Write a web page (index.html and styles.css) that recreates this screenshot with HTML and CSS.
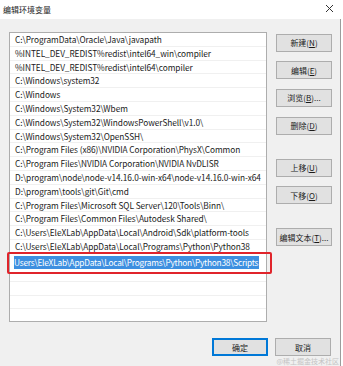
FILE: index.html
```html
<!DOCTYPE html>
<html lang="zh-CN">

<head>
    <meta charset="UTF-8">
    <meta name="viewport" content="width=device-width, initial-scale=1.0">
    <title>编辑环境变量</title>
    <link rel="stylesheet" href="styles.css">
</head>

<body>

    <div class="window">
        <div class="titlebar">
            <span class="title">编辑环境变量</span>
            <svg class="close" width="9" height="9" viewBox="0 0 9 9">
                <path d="M1 1 L8 8 M8 1 L1 8" stroke="#333" stroke-width="1" fill="none" />
            </svg>
        </div>

        <div class="dialog">
            <div class="main">
                <div class="list">
                    <div class="row">C:\ProgramData\Oracle\Java\javapath</div>
                    <div class="row">%INTEL_DEV_REDIST%redist\intel64_win\compiler</div>
                    <div class="row">%INTEL_DEV_REDIST%redist\intel64\compiler</div>
                    <div class="row">C:\Windows\system32</div>
                    <div class="row">C:\Windows</div>
                    <div class="row">C:\Windows\System32\Wbem</div>
                    <div class="row">C:\Windows\System32\WindowsPowerShell\v1.0\</div>
                    <div class="row">C:\Windows\System32\OpenSSH\</div>
                    <div class="row">C:\Program Files (x86)\NVIDIA Corporation\PhysX\Common</div>
                    <div class="row">C:\Program Files\NVIDIA Corporation\NVIDIA NvDLISR</div>
                    <div class="row">D:\program\node\node-v14.16.0-win-x64\node-v14.16.0-win-x64</div>
                    <div class="row">D:\program\tools\git\Git\cmd</div>
                    <div class="row">C:\Program Files\Microsoft SQL Server\120\Tools\Binn\</div>
                    <div class="row">C:\Program Files\Common Files\Autodesk Shared\</div>
                    <div class="row">C:\Users\EleXLab\AppData\Local\Android\Sdk\platform-tools</div>
                    <div class="row">C:\Users\EleXLab\AppData\Local\Programs\Python\Python38</div>
                    <div class="row edit">
                        <span class="selected">Users\EleXLab\AppData\Local\Programs\Python\Python38\Scripts</span>
                        <div class="mark"></div>
                    </div>
                    <div class="row empty"></div>
                    <div class="row empty"></div>
                    <div class="row empty"></div>
                </div>

                <div class="side">
                    <button class="btn">新建(<u>N</u>)</button>
                    <button class="btn">编辑(<u>E</u>)</button>
                    <button class="btn">浏览(<u>B</u>)...</button>
                    <button class="btn">删除(<u>D</u>)</button>
                    <button class="btn gap">上移(<u>U</u>)</button>
                    <button class="btn">下移(<u>O</u>)</button>
                    <button class="btn gap">编辑文本(<u>T</u>)...</button>
                </div>
            </div>

            <div class="footer">
                <button class="btn default">确定</button>
                <button class="btn">取消</button>
            </div>

            <div class="watermark">@稀土掘金技术社区</div>
        </div>
    </div>

</body>

</html>
```

FILE: styles.css
```css
body {
    margin: 0;
    font-family: "Noto Sans CJK SC", "Noto Sans", sans-serif;
    background-color: #ffffff;
}

.window {
    width: 343px;
    height: 366px;
    overflow: hidden;
}

.titlebar {
    height: 19px;
    background: #ffffff;
    display: flex;
    align-items: center;
    justify-content: space-between;
    padding: 0 9px 0 3px;
}

.title {
    font-size: 8px;
    color: #222;
}

.close {
    margin-top: -2px;
}

.dialog {
    position: relative;
    height: 347px;
    width: 341px;
    background: #f0f0f0;
    border-right: 1px solid #9c9c9c;
    padding-top: 13px;
    box-sizing: border-box;
}

.main {
    display: flex;
    align-items: flex-start;
    padding-left: 9px;
}

.list {
    width: 258px;
    height: 290px;
    box-sizing: border-box;
    background: #ffffff;
    border: 1px solid #adadad;
}

.row {
    height: 13.8px;
    box-sizing: border-box;
    border-bottom: 1px solid #f0f0f0;
    padding-left: 5px;
    font-size: 8.3px;
    letter-spacing: -0.06px;
    line-height: 12.8px;
    color: #1a1a1a;
    white-space: nowrap;
    overflow: hidden;
}

.row.edit {
    position: relative;
    height: 15px;
    overflow: visible;
    padding-left: 4px;
    padding-top: 2px;
    border-bottom: none;
}

.selected {
    display: inline-block;
    background: #3d8fe0;
    color: #ffffff;
    letter-spacing: -0.22px;
    line-height: 13px;
    height: 13px;
    padding-right: 1px;
    vertical-align: top;
}

.mark {
    position: absolute;
    left: -3px;
    top: -2px;
    width: 265px;
    height: 22px;
    box-sizing: border-box;
    border: 2px solid #e0242b;
    border-radius: 2px;
}

.row.empty {
    height: 13.5px;
}

.side {
    display: flex;
    flex-direction: column;
    margin-left: 9px;
    padding-top: 1.5px;
}

.btn {
    width: 56px;
    height: 18px;
    padding: 0;
    margin-bottom: 9.7px;
    background-color: #e1e1e1;
    border: 1px solid #adadad;
    font-family: "Noto Sans CJK SC", "Noto Sans", sans-serif;
    font-size: 8px;
    color: #1a1a1a;
    white-space: nowrap;
}

.btn.gap {
    margin-top: 14.3px;
}

.footer {
    display: flex;
    justify-content: flex-end;
    gap: 7px;
    padding-right: 9px;
    margin-top: 16px;
}

.footer .btn {
    margin-bottom: 0;
}

.btn.default {
    border-color: #0078d7;
    box-shadow: inset 0 0 0 1px #0078d7;
}

.watermark {
    position: absolute;
    right: 1px;
    bottom: 0;
    font-size: 7px;
    color: #c4c4c4;
    line-height: 9px;
}
```
